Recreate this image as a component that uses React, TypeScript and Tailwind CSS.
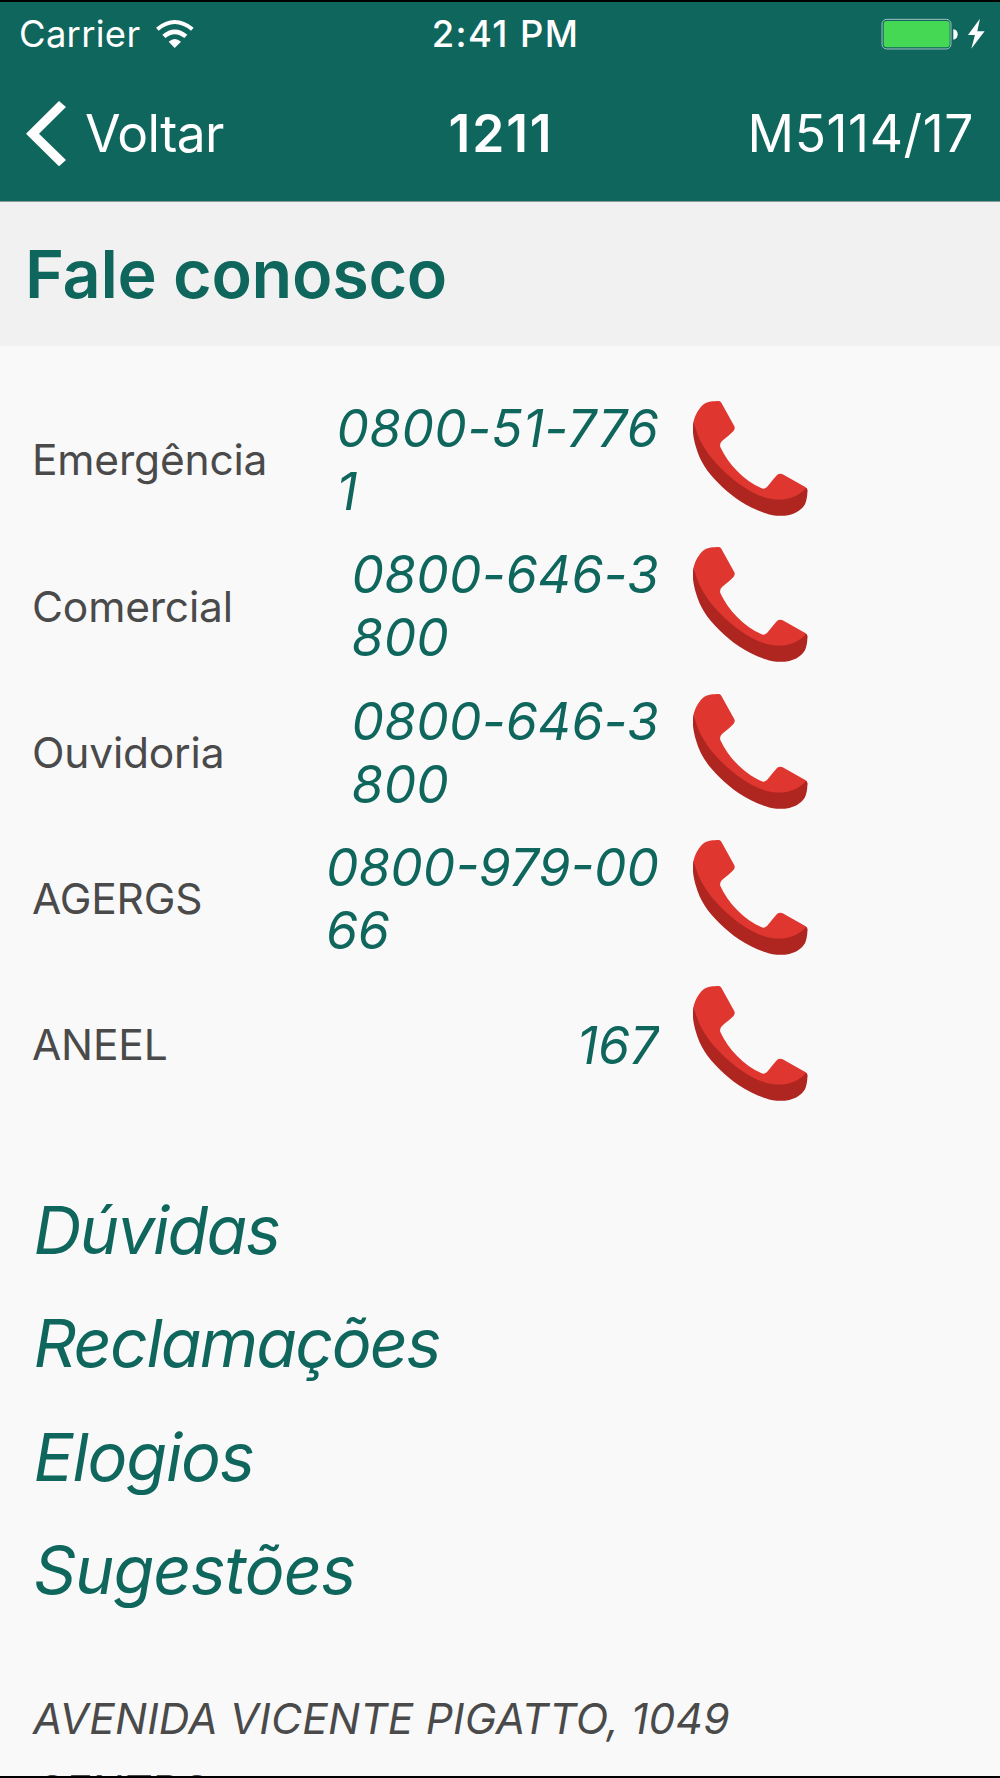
type Contact = {
  label: string;
  lines: string[];
  tracking: string;
};

const CONTACTS: Contact[] = [
  {
    label: "Emergência",
    lines: ["0800-51-776", "1"],
    tracking: "tracking-[0.4px]",
  },
  {
    label: "Comercial",
    lines: ["0800-646-3", "800"],
    tracking: "tracking-[0.25px]",
  },
  {
    label: "Ouvidoria",
    lines: ["0800-646-3", "800"],
    tracking: "tracking-[0.25px]",
  },
  {
    label: "AGERGS",
    lines: ["0800-979-00", "66"],
    tracking: "tracking-normal",
  },
  { label: "ANEEL", lines: ["167"], tracking: "tracking-normal" },
];

const LINKS = [
  { text: "Dúvidas", tracking: "tracking-[-1.7px]" },
  { text: "Reclamações", tracking: "tracking-[-1.75px]" },
  { text: "Elogios", tracking: "tracking-[-1.1px]" },
  { text: "Sugestões", tracking: "tracking-[-1px]" },
];

function WifiIcon() {
  return (
    <svg viewBox="470 54 113 84" className="w-[37.7px] h-[28px]" fill="#fff">
      <path d="M470 77 Q526 31 583 77 L575 86 Q526 46 478 86 Z" />
      <path d="M489 98 Q526 67 564 98 L555 108 Q526 85 498 108 Z" />
      <path d="M508 119 Q526 103 545 119 L526 138 Z" />
    </svg>
  );
}

function BatteryIcon() {
  return (
    <svg viewBox="482 52 312 94" className="w-[104px] h-[31.3px]">
      <rect
        x="485"
        y="56"
        width="207"
        height="89"
        rx="14"
        fill="none"
        stroke="#a3c5c1"
        strokeWidth="3"
      />
      <rect x="490" y="61" width="198" height="79" rx="9" fill="#45d854" />
      <path d="M699 86 Q712 88 712 101 Q712 115 699 117 Z" fill="#fff" />
      <path d="M779 54 L743 103 L764 103 L753 144 L793 92 L771 92 Z" fill="#fff" />
    </svg>
  );
}

function BackIcon() {
  return (
    <svg viewBox="79 302 120 196" className="w-[40px] h-[65.3px]" fill="#fff">
      <path d="M178 302 L199 320 L118 400 L199 479 L178 498 L79 400 Z" />
    </svg>
  );
}

function PhoneIcon() {
  return (
    <svg viewBox="70 64 345 345" className="w-[115px] h-[115px] shrink-0">
      <path
        fill="#df362f"
        d="M72 124 C78 101 91 82 103 73 C113 66 132 64 148 64 Q152 64 155 69 L194 140 Q197 147 192 153 C182 165 167 174 157 184 Q149 192 152 202 C175 253 222 302 276 326 Q284 329 292 322 C302 310 313 296 322 286 Q330 280 339 284 L408 323 Q414 327 413 335 L404 372 L320 380 L270 370 L160 300 L110 235 L80 170 Z"
      />
      <path
        fill="#af2621"
        d="M72 124 C84 180 110 221 150 262 C199 311 256 352 312 359 C352 363 386 350 407 327 Q411 322 413 331 C414 343 411 362 406 374 C394 393 376 402 359 406 C338 410 311 410 288 401 C231 382 186 350 148 312 C112 277 91 245 79 203 C71 177 66 146 72 124 Z"
      />
    </svg>
  );
}

export default function App() {
  return (
    <div className="w-[1000px] h-[1778px] overflow-hidden flex flex-col bg-[#f9f9f9] border-t-2 border-b-2 border-black font-['Inter',sans-serif]">
      {/* Status bar + navigation */}
      <header className="h-[200px] shrink-0 bg-[#0f665d] border-b border-[#8a9c9a] text-white">
        <div className="h-[64px] grid grid-cols-3 items-center pl-[19px] pr-[15px]">
          <div className="flex items-center gap-[16px]">
            <span className="text-[36.4px] leading-none tracking-[0.3px]">
              Carrier
            </span>
            <WifiIcon />
          </div>
          <span className="pl-[7px] text-center text-[36.4px] leading-none font-medium tracking-[1.4px]">
            2:41 PM
          </span>
          <div className="flex justify-end">
            <BatteryIcon />
          </div>
        </div>
        <div className="h-[135px] grid grid-cols-3 items-center pl-[26px] pr-[26px]">
          <div className="flex items-center gap-[19px]">
            <BackIcon />
            <span className="text-[51.5px] leading-none tracking-[-0.6px]">
              Voltar
            </span>
          </div>
          <span className="pl-[2px] text-center text-[51.5px] leading-none font-semibold tracking-[1.9px]">
            1211
          </span>
          <span className="text-right text-[51.5px] leading-none tracking-[0.6px]">
            M5114/17
          </span>
        </div>
      </header>

      <div className="h-[144px] shrink-0 flex items-center pl-[25px] bg-[#f1f1f1]">
        <h1 className="text-[66.5px] leading-none font-semibold tracking-[-0.3px] text-[#0f665d]">
          Fale conosco
        </h1>
      </div>

      <main className="px-[32px] pt-[39.5px]">
        {/* Phone numbers */}
        {CONTACTS.map(({ label, lines, tracking }) => (
          <div key={label} className="h-[146.25px] flex items-center">
            <span className="w-[240px] shrink-0 pt-[4px] text-[42.5px] leading-none tracking-[-0.2px] text-[#4a4a4a]">
              {label}
            </span>
            <div className="w-[387px] shrink-0 pt-[3px] flex justify-end">
              <div
                className={`overflow-hidden text-[51.5px] leading-[63px] italic text-[#0f665d] ${tracking}`}
              >
                {lines.map((line) => (
                  <div key={line} className="whitespace-nowrap">
                    {line}
                  </div>
                ))}
              </div>
            </div>
            <div className="pl-[34px]">
              <PhoneIcon />
            </div>
          </div>
        ))}

        <nav className="pt-[56.5px] pl-[1.5px] flex flex-col">
          {LINKS.map(({ text, tracking }) => (
            <a
              key={text}
              className={`h-[113.5px] flex items-center text-[66.5px] leading-none italic text-[#0f665d] ${tracking}`}
            >
              {text}
            </a>
          ))}
        </nav>

        <address className="pt-[55.5px] pl-[1px] text-[42.5px] leading-[72px] tracking-[0.2px] italic text-[#4a4a4a] whitespace-nowrap">
          <div>AVENIDA VICENTE PIGATTO, 1049</div>
          <div>CENTRO</div>
        </address>
      </main>
    </div>
  );
}
